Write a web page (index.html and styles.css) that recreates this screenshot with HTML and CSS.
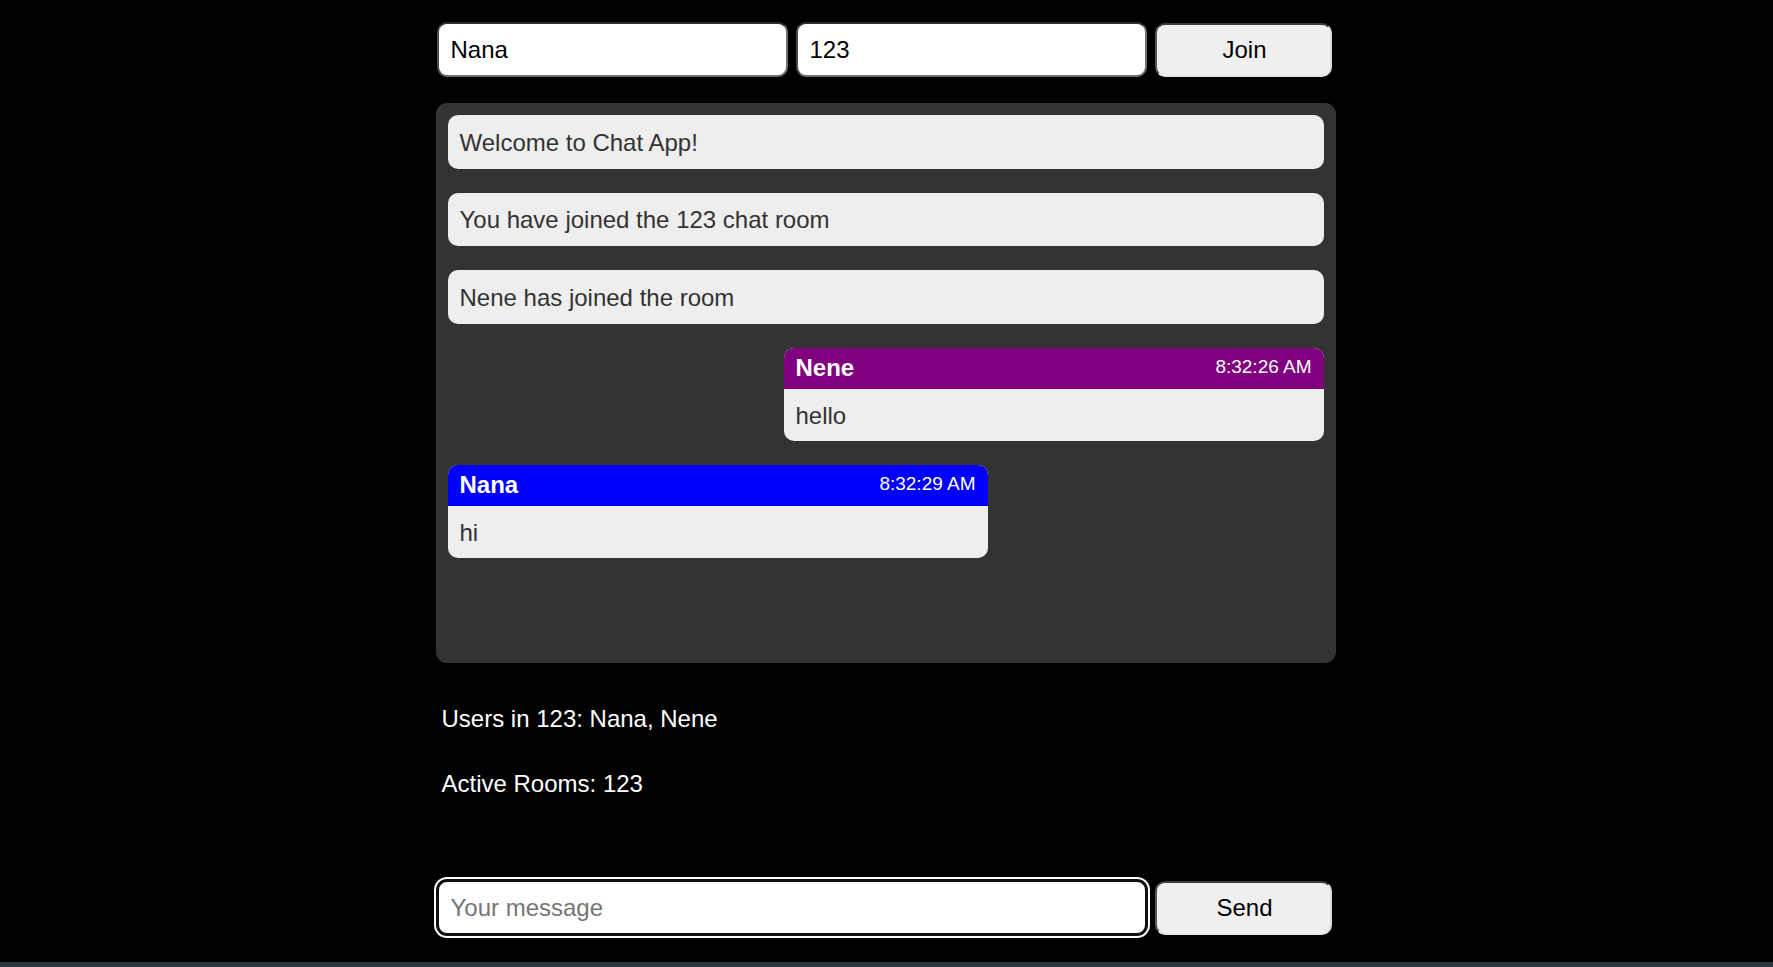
FILE: index.html
```html
<!DOCTYPE html>
<html lang="en">
<head>
<meta charset="utf-8">
<title>Chat App</title>
<link rel="stylesheet" href="styles.css">
</head>
<body>
<div class="app">
  <div class="join-row">
    <input class="field" type="text" value="Nana">
    <input class="field" type="text" value="123">
    <button class="btn" type="button">Join</button>
  </div>

  <div class="chat">
    <div class="sys-msg">Welcome to Chat App!</div>
    <div class="sys-msg">You have joined the 123 chat room</div>
    <div class="sys-msg">Nene has joined the room</div>
    <div class="bubble bubble-right">
      <div class="bubble-head head-purple">
        <span class="bubble-name">Nene</span>
        <span class="bubble-time">8:32:26 AM</span>
      </div>
      <div class="bubble-body">hello</div>
    </div>
    <div class="bubble">
      <div class="bubble-head head-blue">
        <span class="bubble-name">Nana</span>
        <span class="bubble-time">8:32:29 AM</span>
      </div>
      <div class="bubble-body">hi</div>
    </div>
  </div>

  <div class="info">
    <div class="info-line">Users in 123: Nana, Nene</div>
    <div class="info-line info-rooms">Active Rooms: 123</div>
  </div>

  <div class="send-row">
    <input class="field field-focused" type="text" placeholder="Your message">
    <button class="btn" type="button">Send</button>
  </div>
</div>
<div class="bottom-bar"></div>
</body>
</html>
```

FILE: styles.css
```css
html, body {
  margin: 0;
  padding: 0;
  background: #000;
  overflow: hidden;
}

body {
  font-family: "Liberation Sans", Arial, sans-serif;
  font-size: 24px;
  color: #fff;
}

.app {
  width: 900px;
  margin: 0 auto;
  padding-top: 22px;
  padding-right: 2px;
}

.join-row,
.send-row {
  display: flex;
  align-items: center;
  gap: 8px;
  padding-left: 1px;
  padding-right: 4px;
}

.field {
  flex: 1;
  min-width: 0;
  height: 55px;
  box-sizing: border-box;
  padding: 0 12px;
  font-family: "Liberation Sans", Arial, sans-serif;
  font-size: 24px;
  color: #000;
  background: #fff;
  border: 2px solid;
  border-color: #2e2e2e #6e6e6e #6e6e6e #4a4a4a;
  border-radius: 10px;
  outline: none;
}

.field::placeholder {
  color: #757575;
}

.field-focused {
  border-color: #101010;
  box-shadow: 0 0 0 1px #101010, 0 0 0 3px #fff;
}

.btn {
  width: 177px;
  height: 54px;
  box-sizing: border-box;
  font-family: "Liberation Sans", Arial, sans-serif;
  font-size: 24px;
  color: #000;
  background: #efefef;
  border: 2px solid;
  border-color: #3c3c3c #dcdcdc #e6e6e6 #555;
  border-radius: 10px;
  padding: 0 0 0 3px;
}

.chat {
  margin-top: 26px;
  height: 560px;
  box-sizing: border-box;
  padding: 12px;
  background: #333;
  border-radius: 11px;
  display: flex;
  flex-direction: column;
  gap: 24px;
}

.sys-msg {
  background: #eee;
  color: #333;
  border-radius: 10px;
  padding: 13.5px 12px 13px;
  line-height: 27px;
}

.bubble {
  width: 540px;
  border-radius: 10px;
  overflow: hidden;
  background: #eee;
}

.bubble-right {
  margin-left: auto;
}

.bubble-head {
  display: flex;
  justify-content: space-between;
  align-items: center;
  padding: 6.5px 12px;
  line-height: 28px;
  color: #fff;
}

.head-purple {
  background: #800080;
}

.head-blue {
  background: #0000ff;
}

.bubble-name {
  font-weight: bold;
}

.bubble-time {
  font-size: 19px;
  line-height: 22px;
  margin-top: -2px;
}

.bubble-body {
  color: #333;
  padding: 13px 12px 12px;
  line-height: 27px;
}

.info {
  margin-top: 42px;
  padding-left: 6px;
}

.info-line {
  line-height: 28px;
}

.info-rooms {
  margin-top: 37px;
}

.send-row {
  margin-top: 82px;
}

.bottom-bar {
  margin-top: 27px;
  height: 5px;
  background: #2a3741;
}
```
